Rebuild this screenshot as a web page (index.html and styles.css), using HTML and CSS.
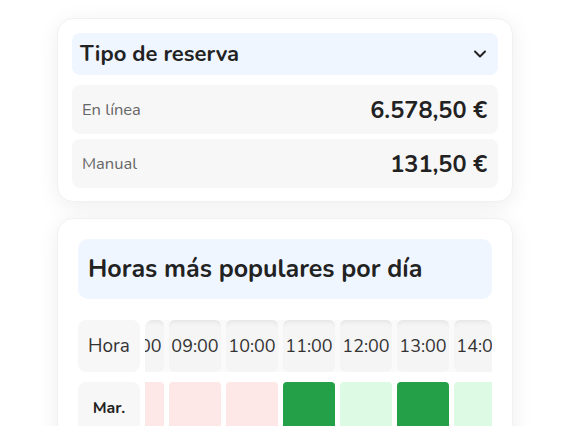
FILE: index.html
```html
<!DOCTYPE html>
<html lang="es">
<head>
  <meta charset="UTF-8" />
  <title>Estadísticas de reservas</title>
  <link rel="stylesheet" href="styles.css">
</head>
<body>
  <main class="page">

    <!-- Tipo de reserva -->
    <section class="card">
      <button class="card-toggle" type="button">
        <span>Tipo de reserva</span>
        <svg class="chevron" width="14" height="8" viewBox="0 0 14 8" aria-hidden="true">
          <path d="M2 1.5l5 5 5-5" fill="none" stroke="#222" stroke-width="2" stroke-linecap="round" stroke-linejoin="round"/>
        </svg>
      </button>
      <div class="stat-list">
        <div class="stat-row">
          <span class="stat-label">En línea</span>
          <span class="stat-value">6.578,50 €</span>
        </div>
        <div class="stat-row">
          <span class="stat-label">Manual</span>
          <span class="stat-value">131,50 €</span>
        </div>
      </div>
    </section>

    <!-- Horas más populares -->
    <section class="card card-heatmap">
      <h2 class="card-title">Horas más populares por día</h2>
      <div class="heatmap">
        <div class="heatmap-days" id="heatmapDays">
          <div class="heatmap-label">Hora</div>
        </div>
        <div class="heatmap-scroll" id="heatmapScroll">
          <div class="heatmap-grid" id="heatmapGrid"></div>
        </div>
      </div>
    </section>

  </main>

  <script>
    const hours = ['08:00', '09:00', '10:00', '11:00', '12:00', '13:00', '14:00', '15:00', '16:00', '17:00'];
    // 0 = poco, 1 = medio, 2 = mucho
    const days = [
      { name: 'Mar.', levels: [0, 0, 0, 2, 1, 2, 1, 0, 1, 0] },
      { name: 'Mié.', levels: [0, 1, 0, 1, 2, 1, 0, 0, 1, 1] },
    ];

    const daysCol = document.getElementById('heatmapDays');
    const grid = document.getElementById('heatmapGrid');
    const scroll = document.getElementById('heatmapScroll');

    grid.style.gridTemplateColumns = `repeat(${hours.length}, 52px)`;

    hours.forEach(h => {
      const cell = document.createElement('div');
      cell.className = 'heatmap-hour';
      cell.textContent = h;
      grid.appendChild(cell);
    });

    days.forEach(day => {
      const label = document.createElement('div');
      label.className = 'heatmap-day';
      label.textContent = day.name;
      daysCol.appendChild(label);

      day.levels.forEach(level => {
        const cell = document.createElement('div');
        cell.className = 'heatmap-cell level-' + level;
        grid.appendChild(cell);
      });
    });

    scroll.scrollLeft = 33;
  </script>
</body>
</html>
```

FILE: styles.css
```css
body {
  margin: 0;
  background: #fff;
  font-family: "Nunito", "Open Sans", sans-serif;
  color: #222;
}
.page {
  width: 456px;
  padding: 18px 0 0 57px;
  display: flex;
  flex-direction: column;
  gap: 16px;
}
.card {
  background: #fff;
  border: 1px solid #f1f1f1;
  border-radius: 16px;
  padding: 14px 14px 13px;
  box-shadow: 0 4px 22px rgba(0,0,0,0.07);
}
.card-toggle {
  width: 100%;
  height: 42px;
  display: flex;
  align-items: center;
  justify-content: space-between;
  padding: 0 11px 0 8px;
  margin-bottom: 10px;
  border: none;
  border-radius: 8px;
  background: #eff6ff;
  font-family: inherit;
  font-size: 22px;
  font-weight: 700;
  color: #222;
  cursor: pointer;
}
.chevron {
  display: block;
}
.stat-list {
  display: flex;
  flex-direction: column;
  gap: 5px;
}
.stat-row {
  height: 49px;
  display: flex;
  align-items: center;
  justify-content: space-between;
  padding: 0 11px 0 10px;
  border-radius: 8px;
  background: #f7f7f7;
}
.stat-label {
  font-size: 16.5px;
  color: #666;
}
.stat-value {
  font-size: 23.5px;
  font-weight: 700;
  color: #222;
}
.card-heatmap {
  padding: 20px 20px 0;
  height: 220px;
  overflow: hidden;
}
.card-title {
  margin: 0 0 21px;
  height: 60px;
  display: flex;
  align-items: center;
  padding: 0 10px;
  border-radius: 10px;
  background: #eff6ff;
  font-size: 25px;
  font-weight: 700;
  color: #222;
}
.heatmap {
  display: flex;
  gap: 5px;
}
.heatmap-days {
  width: 62px;
  flex-shrink: 0;
  display: flex;
  flex-direction: column;
  gap: 10px;
}
.heatmap-label,
.heatmap-day {
  height: 52px;
  display: flex;
  align-items: center;
  justify-content: center;
  border-radius: 8px;
  background: #f7f7f7;
}
.heatmap-label {
  font-size: 19px;
  color: #333;
}
.heatmap-day {
  font-size: 16px;
  font-weight: 700;
  color: #222;
}
.heatmap-scroll {
  position: relative;
  flex: 1;
  overflow-x: auto;
  scrollbar-width: none;
  border-radius: 8px 8px 0 0;
  background: linear-gradient(#fafafa, #fafafa) top / 100% 52px no-repeat;
}
.heatmap-grid {
  display: grid;
  grid-auto-rows: 52px;
  gap: 10px 5px;
}
.heatmap-hour {
  display: flex;
  align-items: center;
  justify-content: center;
  border-radius: 6px;
  background: #f5f5f5;
  box-shadow: inset 0 6px 6px -6px rgba(0,0,0,0.12);
  font-size: 18px;
  color: #333;
}
.heatmap-cell {
  border-radius: 4px;
}
.level-0 { background: #fde8e7; }
.level-1 { background: #dcfae4; }
.level-2 { background: #23a048; }
```
